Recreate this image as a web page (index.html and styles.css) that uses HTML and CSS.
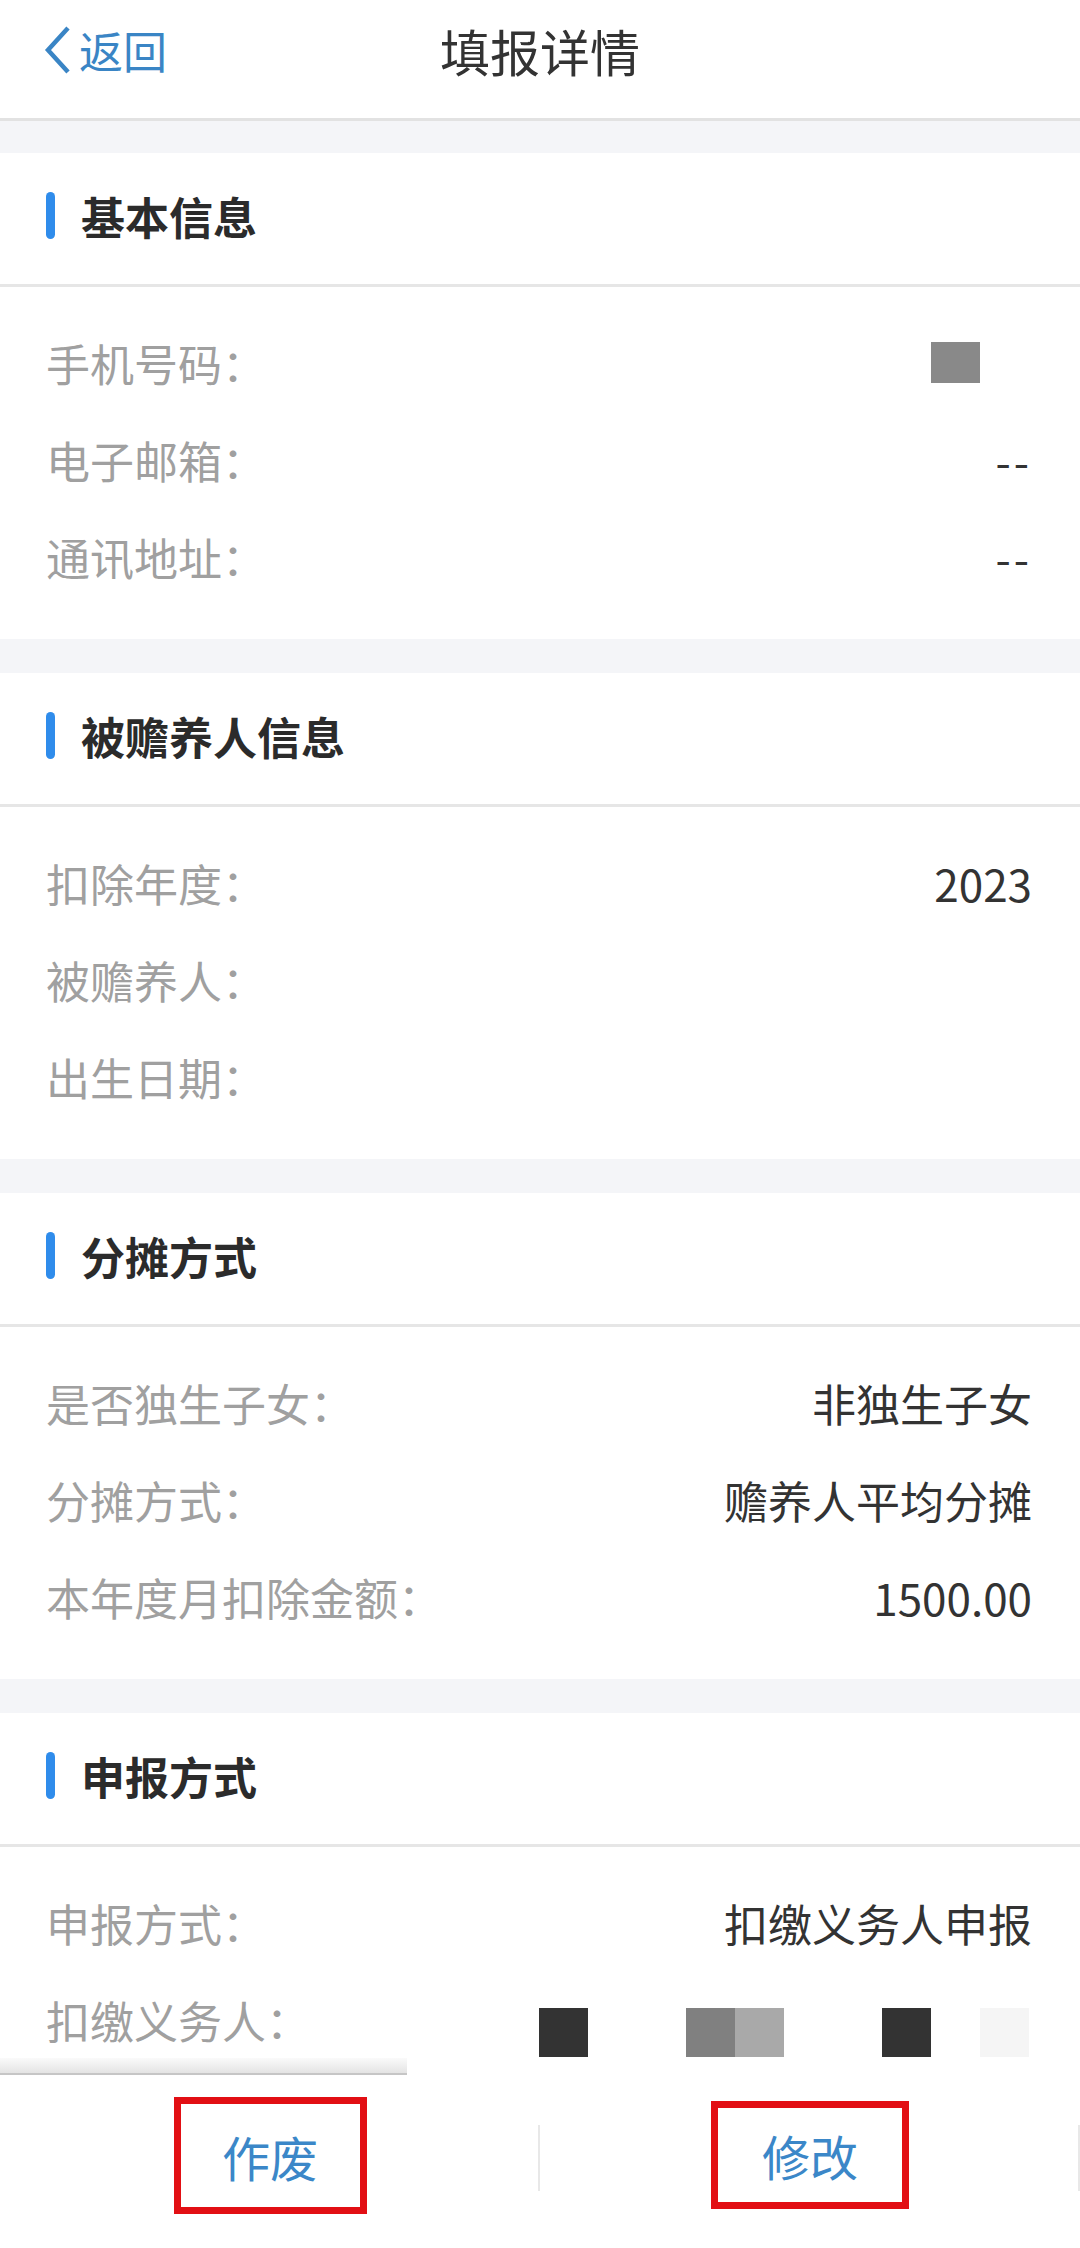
FILE: index.html
```html
<!DOCTYPE html>
<html lang="zh-CN">
<head>
    <meta charset="UTF-8">
    <title>填报详情</title>
    <link rel="stylesheet" href="styles.css">
</head>
<body>

<header class="navbar">
    <a class="back" href="#">
        <svg width="28" height="48" viewBox="0 0 28 48"><path d="M24 2 L4 24 L24 46" fill="none" stroke="#3a85c5" stroke-width="4.5"/></svg>
        <span>返回</span>
    </a>
    <h1 class="title">填报详情</h1>
    <div></div>
</header>

<section class="panel">
    <div class="panel-head"><span class="mark"></span><h2>基本信息</h2></div>
    <div class="panel-body">
        <div class="row"><span class="label">手机号码：</span><span class="value"><i class="masked"></i></span></div>
        <div class="row"><span class="label">电子邮箱：</span><span class="value dash">--</span></div>
        <div class="row"><span class="label">通讯地址：</span><span class="value dash">--</span></div>
    </div>
</section>

<section class="panel">
    <div class="panel-head"><span class="mark"></span><h2>被赡养人信息</h2></div>
    <div class="panel-body">
        <div class="row"><span class="label">扣除年度：</span><span class="value">2023</span></div>
        <div class="row"><span class="label">被赡养人：</span><span class="value"></span></div>
        <div class="row"><span class="label">出生日期：</span><span class="value"></span></div>
    </div>
</section>

<section class="panel">
    <div class="panel-head"><span class="mark"></span><h2>分摊方式</h2></div>
    <div class="panel-body">
        <div class="row"><span class="label">是否独生子女：</span><span class="value">非独生子女</span></div>
        <div class="row"><span class="label">分摊方式：</span><span class="value">赡养人平均分摊</span></div>
        <div class="row"><span class="label">本年度月扣除金额：</span><span class="value">1500.00</span></div>
    </div>
</section>

<section class="panel last">
    <div class="panel-head"><span class="mark"></span><h2>申报方式</h2></div>
    <div class="panel-body">
        <div class="row"><span class="label">申报方式：</span><span class="value">扣缴义务人申报</span></div>
        <div class="row">
            <span class="label">扣缴义务人：</span>
            <span class="value mosaic">
                <i class="px dark"></i><i class="px"></i><i class="px"></i><i class="px mid"></i><i class="px soft"></i>
                <i class="px"></i><i class="px"></i><i class="px dark"></i><i class="px"></i><i class="px faint"></i>
            </span>
        </div>
    </div>
</section>

<footer class="toolbar">
    <div class="tool"><a class="btn btn-void" href="#">作废</a></div>
    <div class="tool"><a class="btn btn-edit" href="#">修改</a></div>
</footer>

</body>
</html>
```

FILE: styles.css
```css
body {
    margin: 0;
    background: #f4f5f8;
    font-family: "Noto Sans CJK SC", "Noto Sans", sans-serif;
    color: #333;
}

/* top bar */
.navbar {
    height: 100px;
    padding-bottom: 18px;
    background: #fff;
    border-bottom: 3px solid #e2e2e2;
    display: grid;
    grid-template-columns: 1fr auto 1fr;
    align-items: center;
}
.back {
    display: flex;
    align-items: center;
    padding-left: 44px;
    color: #3a85c5;
    text-decoration: none;
    font-size: 44px;
    line-height: 1;
}
.back span {
    margin-left: 7px;
}
.title {
    margin: 0;
    font-size: 50px;
    font-weight: 400;
    line-height: 1;
    color: #333;
}

/* sections */
.panel {
    background: #fff;
    margin-top: 34px;
}
.navbar + .panel {
    margin-top: 32px;
}
.panel-head {
    height: 134px;
    padding: 0 0 6px 46px;
    box-sizing: border-box;
    border-bottom: 3px solid #e6e6e6;
    display: flex;
    align-items: center;
}
.mark {
    width: 9px;
    height: 47px;
    border-radius: 5px;
    background: #2f8ceb;
}
.panel-head h2 {
    margin: 0 0 0 26px;
    font-size: 44px;
    font-weight: 700;
    line-height: 1;
    color: #2b2b2b;
}
.panel-body {
    padding: 27px 48px 34px 46px;
}
.panel.last .panel-body {
    padding-bottom: 7px;
}
.row {
    height: 97px;
    display: flex;
    align-items: center;
    justify-content: space-between;
    font-size: 44px;
    line-height: 1;
}
.label {
    color: #a0a0a0;
}
.value {
    color: #333;
    display: flex;
    align-items: center;
}
.value.dash {
    letter-spacing: 3px;
}
.masked {
    display: block;
    width: 49px;
    height: 41px;
    background: #898989;
    margin-right: 52px;
}

/* blurred withholding agent */
.mosaic {
    margin-top: 25px;
    margin-right: 3px;
}
.px {
    display: block;
    width: 49px;
    height: 49px;
    background: #fff;
}
.px.dark { background: #333; }
.px.mid { background: #808080; }
.px.soft { background: #a9a9a9; }
.px.faint { background: #f5f5f5; }

/* bottom actions */
.toolbar {
    position: relative;
    height: 173px;
    background: #fff;
    display: flex;
}
.toolbar::before {
    content: "";
    position: absolute;
    left: 0;
    top: -17px;
    width: 407px;
    height: 15px;
    background: linear-gradient(#fafafa, #e4e4e4);
    border-bottom: 2px solid #c6c6c6;
}
.tool {
    flex: 1;
    position: relative;
    display: flex;
    justify-content: center;
    align-items: flex-start;
    padding-top: 22px;
}
.tool::after {
    content: "";
    position: absolute;
    right: 0;
    top: 50px;
    width: 2px;
    height: 66px;
    background: #e8e8e8;
}
.btn {
    box-sizing: border-box;
    border: 7px solid #e20f14;
    display: flex;
    align-items: center;
    justify-content: center;
    color: #3b87c8;
    font-size: 48px;
    line-height: 1;
    text-decoration: none;
}
.btn-void {
    width: 193px;
    height: 117px;
}
.btn-edit {
    width: 198px;
    height: 108px;
    margin-top: 4px;
}
```
